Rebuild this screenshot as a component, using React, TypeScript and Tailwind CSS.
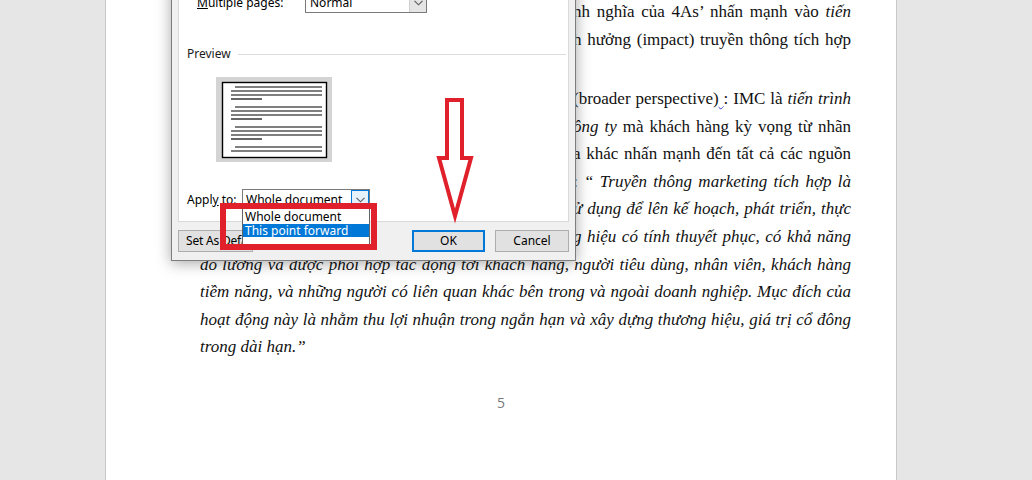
import React from "react";

const serif = { fontFamily: '"Liberation Serif", "Times New Roman", serif' };
const ui = { fontFamily: '"Segoe UI", "Noto Sans", sans-serif' };

function Seg({ children }: { children: React.ReactNode }) {
  return (
    <div className="flex justify-end h-[27.6px]">
      <div className="min-w-[278px] whitespace-nowrap text-justify [text-align-last:justify]">{children}</div>
    </div>
  );
}

function Full({ children }: { children: React.ReactNode }) {
  return <div className="h-[27.6px] italic text-justify [text-align-last:justify]">{children}</div>;
}

function Chevron({ color = "#5a5a5a" }: { color?: string }) {
  return (
    <svg width="9" height="6" viewBox="0 0 9 6">
      <path d="M0.5 0.8 L4.5 4.8 L8.5 0.8" fill="none" stroke={color} strokeWidth="1.1" />
    </svg>
  );
}

function Preview() {
  const groups = [10, 30, 50];
  return (
    <svg width="116" height="85" viewBox="0 0 116 85">
      <rect x="0" y="0" width="116" height="85" fill="#d4d4d4" />
      <rect x="6.5" y="5.5" width="104" height="75" fill="#fff" stroke="#000" strokeWidth="1.4" />
      {groups.map((g) => (
        <g key={g} stroke="#000" strokeWidth="1.2">
          <line x1="19" y1={g} x2="106" y2={g} />
          <line x1="15" y1={g + 4} x2="106" y2={g + 4} />
          <line x1="15" y1={g + 8} x2="106" y2={g + 8} />
          <line x1="15" y1={g + 12} x2="46" y2={g + 12} />
        </g>
      ))}
      <g stroke="#000" strokeWidth="1.2">
        <line x1="19" y1="70" x2="106" y2="70" />
        <line x1="15" y1="74" x2="106" y2="74" />
      </g>
    </svg>
  );
}

export default function App() {
  return (
    <div className="relative w-[1032px] h-[480px] overflow-hidden bg-[#e6e6e6]">
      {/* Document page */}
      <div className="ml-[105px] w-[792px] h-full bg-white border-x border-[#c8c8c8] flex flex-col">
        <div className="ml-[94px] w-[651px] mt-[-2px] text-[17px] leading-[27.6px] text-[#111]" style={serif}>
          <Seg>
            nh nghĩa của 4As’ nhấn mạnh vào <i>tiến</i>
          </Seg>
          <Seg>h hưởng (impact) truyền thông tích hợp</Seg>
          <div className="h-[31.8px]" />
          <Seg>
            (broader perspective)<span className="underline decoration-wavy decoration-[#3a3ad0] decoration-1"> </span>: IMC là <i>tiến trình</i>
          </Seg>
          <Seg>
            <i>ông ty</i> mà khách hàng kỳ vọng từ nhãn
          </Seg>
          <Seg>a khác nhấn mạnh đến tất cả các nguồn</Seg>
          <Seg>
            : <i>“ Truyền thông marketing tích hợp là</i>
          </Seg>
          <Seg>
            <i>ử dụng để lên kế hoạch, phát triển, thực</i>
          </Seg>
          <Seg>
            <i>g hiệu có tính thuyết phục, có khả năng</i>
          </Seg>
          <Full>đo lường và được phối hợp tác động tới khách hàng, người tiêu dùng, nhân viên, khách hàng</Full>
          <Full>tiềm năng, và những người có liên quan khác bên trong và ngoài doanh nghiệp. Mục đích của</Full>
          <Full>hoạt động này là nhằm thu lợi nhuận trong ngắn hạn và xây dựng thương hiệu, giá trị cổ đông</Full>
          <div className="h-[27.6px] italic">trong dài hạn.”</div>
        </div>
        <div className="mt-[32px] h-[20px] leading-[20px] text-center text-[14px] text-[#7a7a7a]" style={{ fontFamily: '"Open Sans", sans-serif' }}>
          5
        </div>
      </div>

      {/* Dialog window */}
      <div
        className="absolute left-[171px] top-[-30px] w-[405px] bg-[#f0f0f0] border border-[#7d7d7d] shadow-[0_2px_14px_rgba(0,0,0,0.35)] px-[6px] pb-[8px] text-[12px] text-black"
        style={ui}
      >
        <div className="bg-white border border-[#d9d9d9] border-t-0 flex flex-col pb-[11px]">
          {/* Multiple pages row */}
          <div className="mt-[21px] h-[21px] flex items-center">
            <div className="ml-[18px] w-[108px]">
              <span className="underline">M</span>ultiple pages:
            </div>
            <div className="w-[122px] h-[21px] border border-[#7a7a7a] bg-white flex items-center">
              <div className="flex-1 pl-[4px]">Normal</div>
              <div className="w-[17px] h-full bg-[#e5e5e5] border-l border-[#cfcfcf] flex items-center justify-center">
                <Chevron />
              </div>
            </div>
          </div>
          {/* Preview header */}
          <div className="mt-[33px] h-[16px] flex items-center">
            <div className="ml-[8px] text-[#1a1a1a]">Preview</div>
            <div className="ml-[7px] w-[328px] h-px bg-[#dcdcdc]" />
          </div>
          {/* Preview image */}
          <div className="mt-[15px] ml-[37px] h-[85px] flex">
            <Preview />
          </div>
          {/* Apply to row */}
          <div className="mt-[27px] h-[21px] flex items-center">
            <div className="ml-[8px] w-[55px]">
              Appl<span className="underline">y</span> to:
            </div>
            <div className="w-[128px] h-[21px] border border-[#7a7a7a] bg-white flex items-center">
              <div className="flex-1 pl-[3px]">Whole document</div>
              <div className="w-[18px] h-full bg-[#e5f1fb] border border-[#0078d7] flex items-center justify-center">
                <Chevron />
              </div>
            </div>
          </div>
        </div>
        {/* Buttons */}
        <div className="mt-[8px] h-[22px] flex items-center">
          <div className="w-[75px] h-[22px] bg-[#e1e1e1] border border-[#adadad] flex items-center pl-[7px] whitespace-nowrap tracking-[-0.2px]">
            Set As Default
          </div>
          <div className="ml-auto w-[73px] h-[22px] bg-[#e1e1e1] border-2 border-[#0078d7] flex items-center justify-center">
            OK
          </div>
          <div className="ml-[10px] w-[74px] h-[22px] bg-[#e1e1e1] border border-[#adadad] flex items-center justify-center">
            Cancel
          </div>
        </div>
      </div>

      {/* Open dropdown list */}
      <div
        className="absolute left-[242px] top-[208px] w-[128px] h-[39px] bg-white border border-[#646464] text-[12px] text-black leading-[13px]"
        style={ui}
      >
        <div className="h-[15px] pl-[2px] flex items-center">Whole document</div>
        <div className="h-[13px] pl-[2px] flex items-center bg-[#0078d7] text-white">This point forward</div>
      </div>

      {/* Red highlight rectangle */}
      <div className="absolute left-[220px] top-[203px] w-[157px] h-[47px] border-[6px] border-[#e0202a]" />

      {/* Red arrow */}
      <svg className="absolute left-0 top-0" width="1032" height="480" viewBox="0 0 1032 480" style={{ pointerEvents: "none" }}>
        <path
          d="M447 100 L462 100 L462 158 L471 158 L455 216 L439 158 L447 158 Z"
          fill="none"
          stroke="#e0202a"
          strokeWidth="4"
          strokeLinejoin="miter"
        />
      </svg>
    </div>
  );
}
